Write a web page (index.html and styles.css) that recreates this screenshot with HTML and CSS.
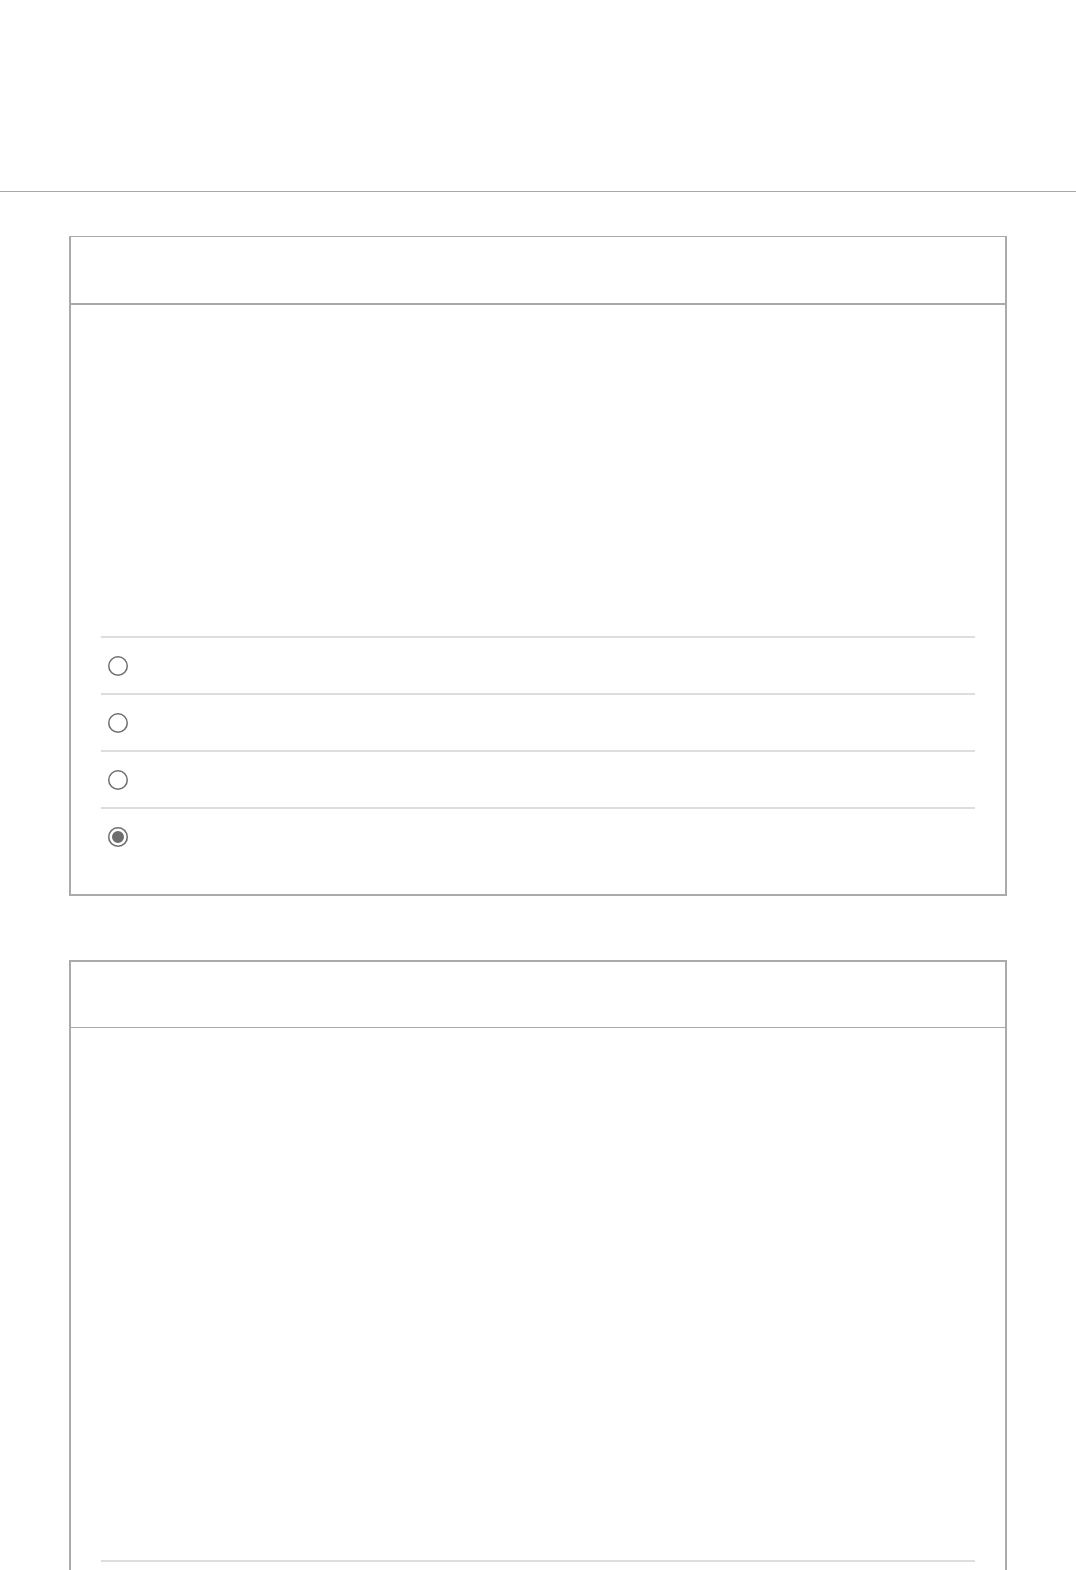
FILE: index.html
```html
<!DOCTYPE html>
<html lang="en">
<head>
    <meta charset="UTF-8">
    <meta name="viewport" content="width=device-width, initial-scale=1.0">
    <title>Quiz</title>
    <link rel="stylesheet" href="styles.css">
</head>

<body>
    <div class="top-bar"></div>

    <div class="quiz-container">
        <div class="question-card first">
            <div class="card-header"></div>
            <div class="card-body">
                <div class="question-text q1"></div>
                <ul class="options">
                    <li><input type="radio" name="q1"></li>
                    <li><input type="radio" name="q1"></li>
                    <li><input type="radio" name="q1"></li>
                    <li><input type="radio" name="q1" checked></li>
                </ul>
            </div>
        </div>

        <div class="question-card second">
            <div class="card-header"></div>
            <div class="card-body">
                <div class="question-text q2"></div>
                <ul class="options">
                    <li><input type="radio" name="q2"></li>
                    <li><input type="radio" name="q2"></li>
                </ul>
            </div>
        </div>
    </div>
</body>
</html>
```

FILE: styles.css
```css
body {
    margin: 0;
    background-color: #fff;
    font-family: 'Lato', sans-serif;
}

.top-bar {
    height: 191px;
    border-bottom: 1px solid #aaa;
}

.quiz-container {
    padding: 44px 69px 0 69px;
}

.question-card {
    border: 2px solid #aaa;
    margin-bottom: 64px;
}

.question-card.first {
    border-top-width: 1px;
}

.card-header {
    height: 66px;
    border-bottom: 2px solid #aaa;
}

.question-card.second .card-header {
    height: 65px;
    border-bottom-width: 1px;
}

.card-body {
    padding: 0 30px 30px;
}

.question-text.q1 {
    height: 331px;
}

.question-text.q2 {
    height: 532px;
}

.options {
    list-style: none;
    margin: 0;
    padding: 0;
}

.options li {
    height: 55px;
    display: flex;
    align-items: center;
    padding-left: 7px;
    border-top: 2px solid #ddd;
}

.options input[type="radio"] {
    appearance: none;
    -webkit-appearance: none;
    width: 20px;
    height: 20px;
    margin: 0;
    border: none;
    border-radius: 50%;
    background-color: #fff;
    box-shadow: inset 0 0 0 1.5px #6e6e6e;
}

.options input[type="radio"]:checked {
    background-color: #6e6e6e;
    box-shadow: inset 0 0 0 1.5px #6e6e6e, inset 0 0 0 4px #fff;
}
```
